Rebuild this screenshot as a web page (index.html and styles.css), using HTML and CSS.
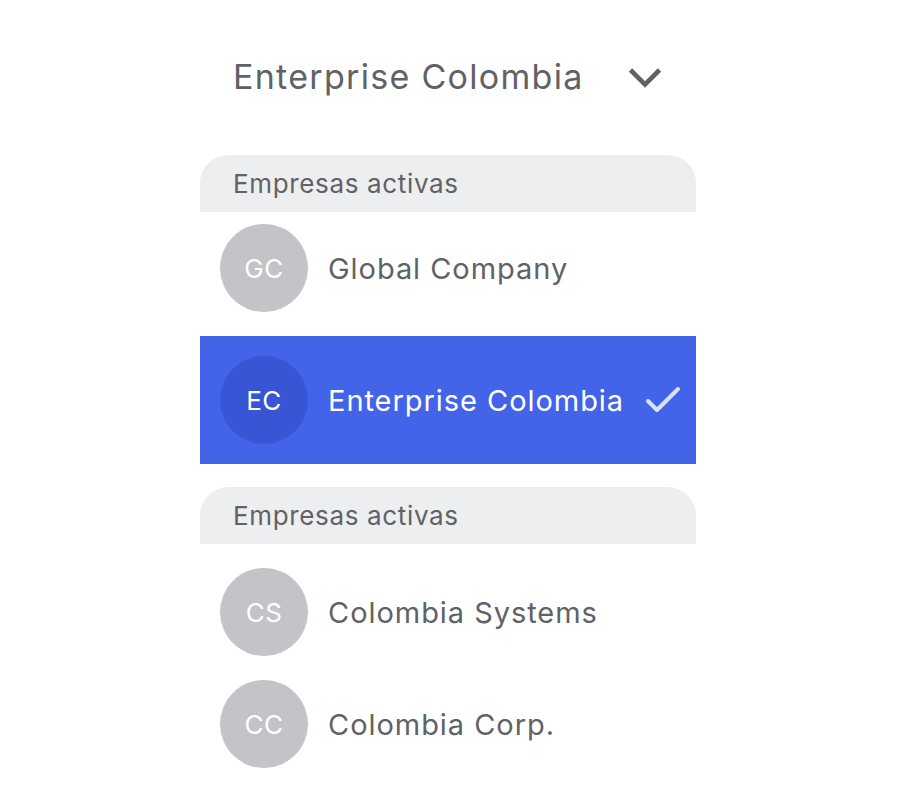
FILE: index.html
```html
<!DOCTYPE html>
<html lang="es">
<head>
    <meta charset="UTF-8">
    <meta name="viewport" content="width=device-width, initial-scale=1.0">
    <title>Selector de empresa</title>
    <link rel="stylesheet" href="styles.css">
</head>
<body>
    <div class="switcher">
        <div class="current">
            <span class="current-name">Enterprise Colombia</span>
            <svg class="chevron" width="34" height="22" viewBox="0 0 34 22">
                <path d="M2.5 3 L17 17.5 L31.5 3" fill="none" stroke="#5f6363" stroke-width="4.6"/>
            </svg>
        </div>

        <div class="group">
            <div class="group-label">Empresas activas</div>
            <div class="item">
                <div class="avatar">GC</div>
                <span class="item-name">Global Company</span>
            </div>
            <div class="item item-selected">
                <div class="avatar">EC</div>
                <span class="item-name">Enterprise Colombia</span>
                <svg class="check" width="36" height="28" viewBox="0 0 36 28">
                    <path d="M3 15 L12 24 L33 3" fill="none" stroke="#d9e0fb" stroke-width="4" stroke-linecap="round" stroke-linejoin="round"/>
                </svg>
            </div>
        </div>

        <div class="group">
            <div class="group-label">Empresas activas</div>
            <div class="group-list">
                <div class="item">
                    <div class="avatar">CS</div>
                    <span class="item-name">Colombia Systems</span>
                </div>
                <div class="item">
                    <div class="avatar">CC</div>
                    <span class="item-name">Colombia Corp.</span>
                </div>
            </div>
        </div>
    </div>
</body>
</html>
```

FILE: styles.css
```css
body {
    margin: 0;
    background: #ffffff;
    font-family: Inter, 'Noto Sans', sans-serif;
    color: #5f6266;
}

.switcher {
    width: 496px;
    margin-left: 200px;
    padding-top: 40px;
}

.current {
    display: flex;
    align-items: center;
    justify-content: space-between;
    height: 72px;
    padding: 0 34px 0 33px;
    margin-bottom: 43px;
}

.current-name {
    font-size: 34px;
    letter-spacing: 1.3px;
}

.chevron {
    margin-top: 4px;
}

.group + .group {
    margin-top: 23px;
}

.group-label {
    background: #edeef0;
    border-radius: 28px 28px 0 0;
    height: 57px;
    line-height: 57px;
    padding-left: 33px;
    font-size: 26px;
    letter-spacing: 0.65px;
}

.group-list {
    padding-top: 12px;
}

.item {
    display: flex;
    align-items: center;
    gap: 20px;
    padding: 12px 20px;
}

.avatar {
    width: 88px;
    height: 88px;
    border-radius: 50%;
    background: #c3c4c7;
    color: #ffffff;
    font-size: 26px;
    letter-spacing: 0.5px;
    display: flex;
    align-items: center;
    justify-content: center;
    flex-shrink: 0;
}

.item-name {
    font-size: 29px;
    letter-spacing: 0.95px;
}

.item-selected {
    margin-top: 12px;
    padding: 20px;
    background: #4364e9;
    color: #ffffff;
}

.item-selected .avatar {
    background: #3755d4;
}

.check {
    margin-left: auto;
    margin-right: -5px;
}
```
